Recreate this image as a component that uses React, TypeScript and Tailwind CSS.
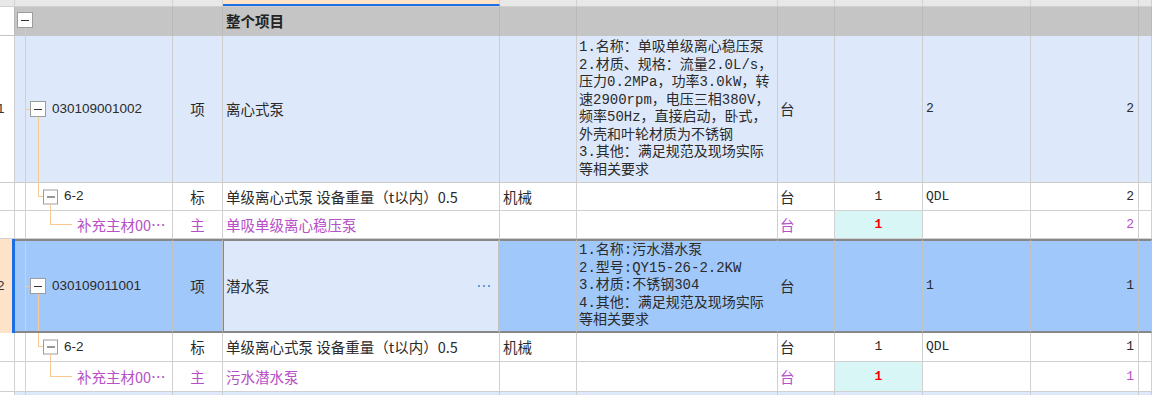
import React from 'react';

const GRID =
  'grid grid-cols-[15px_158px_50px_277px_77px_201px_57px_88px_108px_108px_1fr] grid-rows-[100%]';
const CJK = "font-['Noto_Sans_CJK_SC',sans-serif] text-[14.5px]";
const MONO = "font-['Liberation_Mono','Noto_Sans_CJK_SC',monospace] text-[13px]";
const SANS = "font-['Liberation_Sans',sans-serif] text-[13.5px]";
const DESC =
  "font-['Liberation_Mono','Noto_Sans_CJK_SC',monospace] text-[14px] leading-[17.5px]";
const PURPLE = 'text-[#b64fc8]';

type CProps = { className?: string; children?: React.ReactNode };

// one grid cell, grid line on its right
const C: React.FC<CProps> = ({ className = '', children }) => (
  <div className={`relative flex items-center overflow-hidden border-r ${className}`}>{children}</div>
);

// selected row cell: thick top/bottom border
const S: React.FC<CProps> = ({ className = '', children }) => (
  <div
    className={`relative flex items-center overflow-hidden border-r border-r-[#c2c2c2] border-y-2 border-y-[#878787] ${className}`}
  >
    {children}
  </div>
);

const Box: React.FC<{ className?: string }> = ({ className = '' }) => (
  <span className={`absolute flex items-center justify-center border border-[#9c9c9c] bg-white ${className}`}>
    <span className="block h-px w-2 bg-[#333]" />
  </span>
);

const Trunk = () => <span className="absolute left-[10px] top-0 bottom-0 w-px bg-[#f8c992]" />;

const RowNo: React.FC<{ n: string }> = ({ n }) => (
  <span className={`-ml-[3px] text-[#333] ${SANS}`}>{n}</span>
);

const Desc: React.FC<{ lines: string[] }> = ({ lines }) => (
  <div className={`flex flex-col whitespace-nowrap text-[#2b2b2b] ${DESC}`}>
    {lines.map((l, i) => (
      <span key={i}>{l}</span>
    ))}
  </div>
);

// tree cell pieces
const ItemTree: React.FC<{ code: string }> = ({ code }) => (
  <>
    <Trunk />
    <span className="absolute left-[10px] top-1/2 h-px w-[5px] bg-[#f8c992]" />
    <Box className="left-[15px] top-1/2 -translate-y-1/2 h-4 w-4" />
    <span className="absolute left-[23px] top-[calc(50%+8px)] bottom-0 w-px bg-[#f8c992]" />
    <span className={`pl-[37px] text-[#2b2b2b] ${SANS}`}>{code}</span>
  </>
);

const QuotaTree = () => (
  <>
    <Trunk />
    <span className="absolute left-[23px] top-0 h-1/2 w-[5px] border-l border-b border-[#f8c992]" />
    <Box className="left-[28px] top-1/2 -translate-y-1/2 h-[15px] w-[15px]" />
    <span className="absolute left-[35px] top-[calc(50%+7px)] bottom-0 w-px bg-[#f8c992]" />
    <span className={`pl-[49px] text-[#2b2b2b] ${SANS}`}>6-2</span>
  </>
);

const MaterialTree = () => (
  <>
    <Trunk />
    <span className="absolute left-[35px] top-0 h-1/2 w-[22px] border-l border-b border-[#f8c992]" />
    <span className={`pl-[62px] whitespace-nowrap ${PURPLE} ${CJK}`}>补充主材00…</span>
  </>
);

const QuotaRow: React.FC<{ h: string; qty: string }> = ({ h, qty }) => (
  <div className={`${GRID} ${h} border-b border-[#d0d0d0] bg-white text-[#2b2b2b] [&>div]:border-[#d0d0d0]`}>
    <C />
    <C>
      <QuotaTree />
    </C>
    <C className={`justify-center ${CJK}`}>标</C>
    <C className={`pl-[3px] whitespace-nowrap ${CJK}`}>单级离心式泵 设备重量（t以内）0.5</C>
    <C className={`pl-[3px] ${CJK}`}>机械</C>
    <C />
    <C className={`pl-[2px] ${CJK}`}>台</C>
    <C className={`justify-center ${MONO}`}>1</C>
    <C className={`pl-[3px] ${MONO}`}>QDL</C>
    <C className={`justify-end pr-[4px] ${MONO}`}>{qty}</C>
    <C />
  </div>
);

const MaterialRow: React.FC<{ h: string; name: string; qty: string }> = ({ h, name, qty }) => (
  <div className={`${GRID} ${h} border-b border-[#d0d0d0] bg-white [&>div]:border-[#d0d0d0]`}>
    <C />
    <C>
      <MaterialTree />
    </C>
    <C className={`justify-center ${PURPLE} ${CJK}`}>主</C>
    <C className={`pl-[3px] whitespace-nowrap ${PURPLE} ${CJK}`}>{name}</C>
    <C />
    <C />
    <C className={`pl-[2px] ${PURPLE} ${CJK}`}>台</C>
    <C className={`justify-center bg-[#d9f6f6] font-bold text-[#ff0000] ${MONO}`}>1</C>
    <C />
    <C className={`justify-end pr-[4px] ${PURPLE} ${MONO}`}>{qty}</C>
    <C />
  </div>
);

export default function App() {
  return (
    <div className="h-[395px] w-[1152px] overflow-hidden bg-white text-[#2b2b2b]">
      {/* column header strip */}
      <div className={`${GRID} h-[7px] border-b border-[#d0d0d0] bg-[#e8e8e8] [&>div]:border-[#d3d3d3]`}>
        <C />
        <C />
        <C />
        <C className="border-b-2 border-b-[#1f6fe5]! bg-[#fee3c8]" />
        <C />
        <C />
        <C />
        <C />
        <C />
        <C />
        <C />
      </div>

      {/* group row */}
      <div className={`${GRID} h-[29px] border-b border-[#c5c5c5] bg-[#c5c5c5] [&>div]:border-[#b9b9b9]`}>
        <C className="bg-white border-[#d0d0d0]" />
        <C>
          <Box className="left-[2px] top-[5px] h-4 w-4" />
          <span className="absolute left-[10px] top-[21px] bottom-0 w-px bg-[#f8c992]" />
        </C>
        <C />
        <C className={`pl-[3px] font-bold text-[#222] ${CJK}`}>整个项目</C>
        <C />
        <C />
        <C />
        <C />
        <C />
        <C />
        <C />
      </div>

      {/* item 1 */}
      <div className={`${GRID} h-[147px] border-b border-[#cdcdcd] bg-[#dde9fb] [&>div]:border-[#cdcdcd]`}>
        <C className="bg-white">
          <RowNo n="1" />
        </C>
        <C>
          <ItemTree code="030109001002" />
        </C>
        <C className={`justify-center ${CJK}`}>项</C>
        <C className={`pl-[3px] ${CJK}`}>离心式泵</C>
        <C />
        <C className="pl-[2px]">
          <Desc
            lines={[
              '1.名称：单吸单级离心稳压泵',
              '2.材质、规格：流量2.0L/s，',
              '压力0.2MPa，功率3.0kW，转',
              '速2900rpm，电压三相380V，',
              '频率50Hz，直接启动，卧式，',
              '外壳和叶轮材质为不锈钢',
              '3.其他：满足规范及现场实际',
              '等相关要求',
            ]}
          />
        </C>
        <C className={`pl-[2px] ${CJK}`}>台</C>
        <C />
        <C className={`pl-[3px] ${MONO}`}>2</C>
        <C className={`justify-end pr-[4px] ${MONO}`}>2</C>
        <C />
      </div>

      <QuotaRow h="h-[28px]" qty="2" />
      <MaterialRow h="h-[28px]" name="单吸单级离心稳压泵" qty="2" />

      {/* item 2, selected */}
      <div className={`${GRID} h-[94px] bg-[#a1c8fa]`}>
        <div className="flex items-center border-r-[3px] border-[#1a6ee6] bg-[#fee3c8]">
          <RowNo n="2" />
        </div>
        <S>
          <ItemTree code="030109011001" />
        </S>
        <S className={`justify-center border-r-[#878787] ${CJK}`}>项</S>
        <S className={`justify-between border-l border-l-[#878787] border-r-2 border-r-[#878787] bg-[#dde9fb] pl-[2px] pr-[8px] ${CJK}`}>
          <span>潜水泵</span>
          <span className="flex gap-[3px]">
            <span className="h-[2px] w-[2px] rounded-full bg-[#3d86d8]" />
            <span className="h-[2px] w-[2px] rounded-full bg-[#3d86d8]" />
            <span className="h-[2px] w-[2px] rounded-full bg-[#3d86d8]" />
          </span>
        </S>
        <S />
        <S className="pl-[2px]">
          <Desc
            lines={[
              '1.名称:污水潜水泵',
              '2.型号:QY15-26-2.2KW',
              '3.材质:不锈钢304',
              '4.其他：满足规范及现场实际',
              '等相关要求',
            ]}
          />
        </S>
        <S className={`pl-[2px] ${CJK}`}>台</S>
        <S />
        <S className={`pl-[3px] ${MONO}`}>1</S>
        <S className={`justify-end pr-[4px] ${MONO}`}>1</S>
        <S />
      </div>

      <QuotaRow h="h-[29px]" qty="1" />
      <MaterialRow h="h-[30px]" name="污水潜水泵" qty="1" />

      {/* next item, cut off by the viewport */}
      <div className={`${GRID} h-[40px] bg-[#dde9fb] [&>div]:border-[#cdcdcd]`}>
        <C className="bg-white" />
        <C className="items-start">
          <Trunk />
        </C>
        <C />
        <C />
        <C />
        <C className="items-start pl-[2px] pt-[3px]">
          <Desc lines={['1.名称：管道离心泵']} />
        </C>
        <C />
        <C />
        <C />
        <C />
        <C />
      </div>
    </div>
  );
}
